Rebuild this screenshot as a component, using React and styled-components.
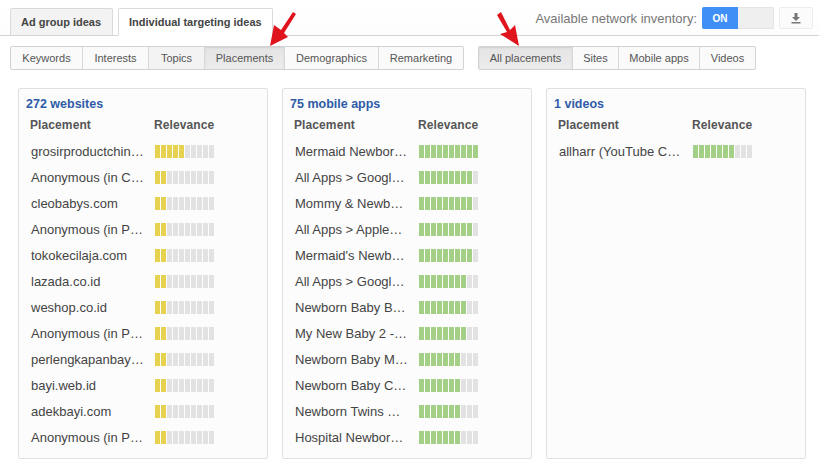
import React from "react"
import styled, { createGlobalStyle } from "styled-components"

const Global = createGlobalStyle`
  html, body {
    margin: 0;
    padding: 0;
    background: #fff;
    font-family: "Liberation Sans", Arial, sans-serif;
  }
`

const Page = styled.div`
  position: relative;
  width: 819px;
  height: 468px;
  overflow: hidden;
`

const TopBar = styled.div`
  display: flex;
  align-items: flex-end;
  height: 35px;
  padding: 0 6px 0 10px;
  border-bottom: 1px solid #d4d4d4;
  background: linear-gradient(#fff, #fdfdfd);
`

const Tab = styled.div`
  box-sizing: border-box;
  height: ${({ $active }) => ($active ? "28px" : "27px")};
  margin-bottom: ${({ $active }) => ($active ? "-1px" : "0")};
  margin-right: 5px;
  padding: 0 ${({ $active }) => ($active ? "10px" : "11px")} 0 10px;
  display: flex;
  align-items: center;
  font-size: 11px;
  font-weight: bold;
  color: #444;
  background: ${({ $active }) => ($active ? "#fff" : "#f3f3f3")};
  border: 1px solid #dadada;
  border-bottom: ${({ $active }) => ($active ? "1px solid #fff" : "0")};
  border-radius: 2px 2px 0 0;
`

const Inventory = styled.div`
  margin-left: auto;
  display: flex;
  align-items: center;
  align-self: flex-start;
  margin-top: 7px;
`

const InventoryLabel = styled.span`
  font-size: 13px;
  color: #777;
  margin-right: 5px;
`

const Toggle = styled.div`
  display: flex;
  width: 72px;
  height: 22px;
  border-radius: 2px;
  overflow: hidden;
  background: #efefef;
  box-shadow: inset 0 0 0 1px #e4e4e4;
`

const ToggleOn = styled.div`
  width: 36px;
  display: flex;
  align-items: center;
  justify-content: center;
  background: #3f8ff6;
  color: #fff;
  font-size: 10px;
  font-weight: bold;
`

const IconButton = styled.div`
  box-sizing: border-box;
  width: 34px;
  height: 22px;
  margin-left: 5px;
  display: flex;
  align-items: center;
  justify-content: center;
  background: #fbfbfb;
  border: 1px solid #ececec;
  border-radius: 2px;
`

const FilterRow = styled.div`
  display: flex;
  gap: 14px;
  padding: 10px 0 0 10px;
`

const Segments = styled.div`
  display: flex;
  height: 24px;
  box-sizing: border-box;
  border: 1px solid #d2d2d2;
  border-radius: 2px;
  background: #fafafa;
`

const Segment = styled.div`
  width: ${({ $w }) => $w}px;
  box-sizing: border-box;
  display: flex;
  align-items: center;
  justify-content: center;
  font-size: 11px;
  color: #555;
  border-left: ${({ $first }) => ($first ? "0" : "1px solid #d8d8d8")};
  background: ${({ $selected, $hover }) =>
    $selected ? "linear-gradient(#e4e4e4, #ececec)" : $hover ? "#f3f3f3" : "transparent"};
  box-shadow: ${({ $selected }) => ($selected ? "inset 0 1px 2px #d0d0d0" : "none")};
`

const Cards = styled.div`
  display: grid;
  grid-template-columns: 250px 250px 260px;
  gap: 14px;
  padding: 18px 0 0 18px;
`

const Card = styled.section`
  box-sizing: border-box;
  height: 371px;
  padding: 8px 0 0 7px;
  background: #fcfcfc;
  border: 1px solid #e0e0e0;
  border-radius: 2px;
`

const CardTitle = styled.h2`
  margin: 0;
  font-size: 12.5px;
  line-height: 14px;
  font-weight: bold;
  color: #2f5ba7;
`

const TableHead = styled.div`
  display: grid;
  grid-template-columns: ${({ $wide }) => ($wide ? "134px" : "124px")} 1fr;
  padding: 7px 0 0 4px;
  font-size: 12px;
  line-height: 14px;
  font-weight: bold;
  letter-spacing: 0.1px;
  color: #555;
`

const Rows = styled.div`
  padding-top: 6px;
`

const Row = styled.div`
  display: grid;
  grid-template-columns: ${({ $wide }) => ($wide ? "134px" : "124px")} 1fr;
  align-items: center;
  height: 26px;
  padding-left: 5px;
`

const Name = styled.span`
  font-size: 13px;
  color: #444;
  white-space: nowrap;
`

const Meter = styled.div`
  display: flex;
  gap: 1px;
  height: 13px;
`

const Tick = styled.i`
  display: block;
  width: 5px;
  background: ${({ $on, $color }) => ($on ? $color : "#e2e2e2")};
`

const Arrow = styled.svg`
  position: absolute;
  left: ${({ $x }) => $x}px;
  top: ${({ $y }) => $y}px;
`

function Relevance({ value, color }) {
  return (
    <Meter>
      {Array.from({ length: 10 }, (_, i) => (
        <Tick key={i} $on={i < value} $color={color} />
      ))}
    </Meter>
  )
}

const YELLOW = "#e6d24f"
const GREEN = "#a3cf86"

const cards = [
  {
    title: "272 websites",
    color: YELLOW,
    rows: [
      ["grosirproductchin…", 5],
      ["Anonymous (in C…", 2],
      ["cleobabys.com", 2],
      ["Anonymous (in P…", 2],
      ["tokokecilaja.com", 2],
      ["lazada.co.id", 2],
      ["weshop.co.id", 2],
      ["Anonymous (in P…", 2],
      ["perlengkapanbay…", 2],
      ["bayi.web.id", 2],
      ["adekbayi.com", 2],
      ["Anonymous (in P…", 2],
    ],
  },
  {
    title: "75 mobile apps",
    color: GREEN,
    rows: [
      ["Mermaid Newbor…", 10],
      ["All Apps > Googl…", 9],
      ["Mommy & Newb…", 9],
      ["All Apps > Apple…", 9],
      ["Mermaid's Newb…", 9],
      ["All Apps > Googl…", 8],
      ["Newborn Baby B…", 8],
      ["My New Baby 2 -…", 8],
      ["Newborn Baby M…", 7],
      ["Newborn Baby C…", 7],
      ["Newborn Twins …", 7],
      ["Hospital Newbor…", 7],
    ],
  },
  {
    title: "1 videos",
    color: GREEN,
    wide: true,
    rows: [["allharr (YouTube C…", 7]],
  },
]

export default function App() {
  return (
    <Page>
      <Global />
      <TopBar>
        <Tab>Ad group ideas</Tab>
        <Tab $active>Individual targeting ideas</Tab>
        <Inventory>
          <InventoryLabel>Available network inventory:</InventoryLabel>
          <Toggle>
            <ToggleOn>ON</ToggleOn>
          </Toggle>
          <IconButton>
            <svg width="10" height="11" viewBox="0 0 10 11">
              <path d="M3.5 0h3v4H9L5 8 1 4h2.5z" fill="#777" />
              <rect x="0.5" y="9" width="9" height="1.5" fill="#777" />
            </svg>
          </IconButton>
        </Inventory>
      </TopBar>

      <FilterRow>
        <Segments>
          <Segment $first $w={71}>Keywords</Segment>
          <Segment $w={66}>Interests</Segment>
          <Segment $w={56} $hover>Topics</Segment>
          <Segment $w={80} $selected>Placements</Segment>
          <Segment $w={94}>Demographics</Segment>
          <Segment $w={85}>Remarketing</Segment>
        </Segments>
        <Segments>
          <Segment $first $w={93} $selected>All placements</Segment>
          <Segment $w={46}>Sites</Segment>
          <Segment $w={81}>Mobile apps</Segment>
          <Segment $w={56}>Videos</Segment>
        </Segments>
      </FilterRow>

      <Cards>
        {cards.map((card) => (
          <Card key={card.title}>
            <CardTitle>{card.title}</CardTitle>
            <TableHead $wide={card.wide}>
              <span>Placement</span>
              <span>Relevance</span>
            </TableHead>
            <Rows>
              {card.rows.map(([name, value], i) => (
                <Row key={i} $wide={card.wide}>
                  <Name>{name}</Name>
                  <Relevance value={value} color={card.color} />
                </Row>
              ))}
            </Rows>
          </Card>
        ))}
      </Cards>

      <Arrow $x={266} $y={8} width="34" height="40" viewBox="0 0 34 40">
        <path d="M4 38 L8 17 L15 22 L27 4 L30 6 L18 25 L22 29 Z" fill="#e0141c" />
      </Arrow>
      <Arrow $x={494} $y={8} width="30" height="40" viewBox="0 0 30 40">
        <path d="M25 38 L6 26 L13 24 L3 7 L7 4 L16 22 L21 17 Z" fill="#e0141c" />
      </Arrow>
    </Page>
  )
}
